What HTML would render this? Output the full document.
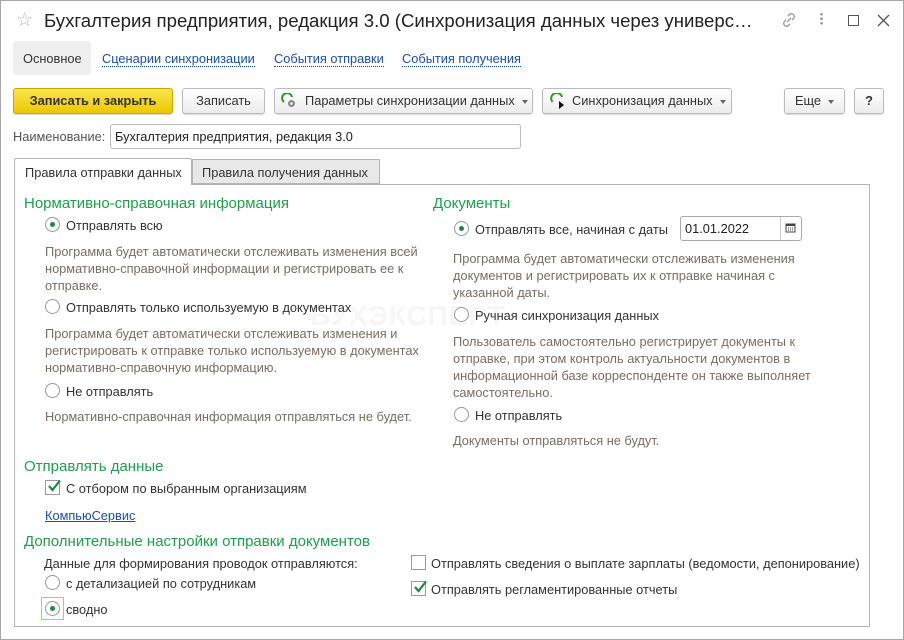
<!DOCTYPE html>
<html><head><meta charset="utf-8"><style>
*{margin:0;padding:0;box-sizing:border-box}
body{width:904px;height:640px;background:#fff;font-family:"Liberation Sans",Arial,sans-serif;font-size:12.8px;color:#333;position:relative;overflow:hidden}
.a{position:absolute;white-space:nowrap}
.frame{position:absolute;left:0;top:0;width:904px;height:640px;border:1px solid #a8a8a8}
.btn{position:absolute;height:26px;border:1px solid #bcbcbc;border-radius:3px;background:linear-gradient(#fff,#ececec);box-shadow:0 1px 1px rgba(0,0,0,.15);color:#333;line-height:24px;text-align:center}
.lnk{color:#1a4fa8;border-bottom:1px dotted #1a4fa8;line-height:14px}
.h{color:#1ea04b;font-size:15px}
.d{color:#7a6d62;line-height:17px;white-space:normal}
.r{position:absolute;width:15px;height:15px;border:1px solid #9a9a9a;border-radius:50%;background:#fff}
.r.on::after{content:"";position:absolute;left:4px;top:4px;width:5px;height:5px;border-radius:50%;background:#1c8a3e}
.cb{position:absolute;width:15px;height:15px;border:1px solid #9a9a9a;background:#fff}
.dd::after{content:"";display:inline-block;margin-left:7px;vertical-align:middle;border-left:3.5px solid transparent;border-right:3.5px solid transparent;border-top:4px solid #666}
</style></head><body>
<div class="frame"></div>
<div class="a" style="left:16px;top:9px;font-size:19px;color:#bbb">☆</div>
<div class="a" style="left:44px;top:10px;font-size:18.6px;color:#222">Бухгалтерия предприятия, редакция 3.0 (Синхронизация данных через универс…</div>
<svg class="a" style="left:780px;top:11px" width="18" height="18" viewBox="0 0 18 18" fill="none" stroke="#999" stroke-width="1.3"><path d="M7 11l4-4M8 5l2-2a3 3 0 014 4l-2 2M10 13l-2 2a3 3 0 01-4-4l2-2"/></svg>
<div class="a" style="left:820px;top:12px;width:3px;height:13px;background:radial-gradient(circle,#999 1.2px,transparent 1.5px) 0 0/3px 4.5px"></div>
<div class="a" style="left:848px;top:15px;width:11px;height:11px;border:1.3px solid #555"></div>
<svg class="a" style="left:877px;top:14px" width="13" height="13" viewBox="0 0 13 13"><path d="M1 1l11 11M12 1L1 12" stroke="#555" stroke-width="1.3"/></svg>

<div class="a" style="left:13px;top:41px;width:78px;height:34px;background:#efefef;border-radius:3px"></div>
<div class="a" style="left:23px;top:51px;color:#333">Основное</div>
<div class="a lnk" style="left:102px;top:52px">Сценарии синхронизации</div>
<div class="a lnk" style="left:274px;top:52px">События отправки</div>
<div class="a lnk" style="left:402px;top:52px">События получения</div>

<div class="btn" style="left:13px;top:88px;width:160px;background:linear-gradient(#fbe54a,#ecc802);border-color:#c9a800;font-weight:bold;color:#333">Записать и закрыть</div>
<div class="btn" style="left:182px;top:88px;width:83px">Записать</div>
<div class="btn" style="left:274px;top:88px;width:259px;text-align:left;padding-left:30px"><span class="dd">Параметры синхронизации данных</span></div>
<svg class="a" style="left:281px;top:93px" width="16" height="16" viewBox="0 0 16 16"><path d="M11 4A5 5 0 103 9" fill="none" stroke="#2a9a2a" stroke-width="2"/><circle cx="10.5" cy="10.5" r="3.5" fill="#888"/><circle cx="10.5" cy="10.5" r="1.3" fill="#fff"/></svg>
<div class="btn" style="left:542px;top:88px;width:190px;text-align:left;padding-left:29px"><span class="dd">Синхронизация данных</span></div>
<svg class="a" style="left:550px;top:93px" width="16" height="16" viewBox="0 0 16 16"><path d="M12 4A5.5 5.5 0 102.5 9" fill="none" stroke="#2a9a2a" stroke-width="2"/><path d="M9 8l5 4-5 4z" fill="#111"/></svg>
<div class="btn" style="left:784px;top:88px;width:61px"><span class="dd">Еще</span></div>
<div class="btn" style="left:854px;top:88px;width:30px;font-weight:bold">?</div>

<div class="a" style="left:13px;top:129px;color:#555">Наименование:</div>
<div class="a" style="left:110px;top:124px;width:411px;height:25px;border:1px solid #bbb;border-radius:3px;padding:4px 4px;color:#222">Бухгалтерия предприятия, редакция 3.0</div>

<div class="a" style="left:14px;top:184px;width:856px;height:443px;border:1px solid #b5b5b5"></div>
<div class="a" style="left:14px;top:158px;width:178px;height:27px;border:1px solid #b5b5b5;border-bottom:none;background:#fff;border-radius:2px 2px 0 0;padding:6px 10px;color:#333">Правила отправки данных</div>
<div class="a" style="left:192px;top:159px;width:188px;height:25px;border:1px solid #b5b5b5;background:#e8e8e8;padding:5px 9px;color:#333">Правила получения данных</div>

<div class="a" style="left:310px;top:300px;font-size:28px;font-weight:bold;color:#f6f6f6;letter-spacing:1px">БУХЭКСПЕРТ</div>

<div class="a h" style="left:24px;top:195px">Нормативно-справочная информация</div>
<div class="r on" style="left:45px;top:217px"></div>
<div class="a" style="left:66px;top:218px">Отправлять всю</div>
<div class="a d" style="left:45px;top:243px;width:385px">Программа будет автоматически отслеживать изменения всей нормативно-справочной информации и регистрировать ее к отправке.</div>
<div class="r" style="left:45px;top:299px"></div>
<div class="a" style="left:66px;top:300px">Отправлять только используемую в документах</div>
<div class="a d" style="left:45px;top:325px;width:385px">Программа будет автоматически отслеживать изменения и регистрировать к отправке только используемую в документах нормативно-справочную информацию.</div>
<div class="r" style="left:45px;top:383px"></div>
<div class="a" style="left:66px;top:384px">Не отправлять</div>
<div class="a d" style="left:45px;top:408px">Нормативно-справочная информация отправляться не будет.</div>

<div class="a h" style="left:433px;top:195px">Документы</div>
<div class="r on" style="left:454px;top:221px"></div>
<div class="a" style="left:475px;top:222px">Отправлять все, начиная с даты</div>
<div class="a" style="left:680px;top:216px;width:122px;height:25px;border:1px solid #aaa;border-radius:3px;padding:4px 4px;color:#222">01.01.2022</div>
<div class="a" style="left:780px;top:217px;width:1px;height:23px;background:#ccc"></div>
<svg class="a" style="left:785px;top:222px" width="11" height="11" viewBox="0 0 11 11"><rect x="1" y="2" width="9" height="8" fill="none" stroke="#444"/><rect x="1" y="2" width="9" height="2" fill="#444"/><path d="M3 6h1M5 6h1M7 6h1M3 8h1M5 8h1M7 8h1" stroke="#444"/></svg>
<div class="a d" style="left:453px;top:250px;width:375px">Программа будет автоматически отслеживать изменения документов и регистрировать их к отправке начиная с указанной даты.</div>
<div class="r" style="left:454px;top:307px"></div>
<div class="a" style="left:475px;top:308px">Ручная синхронизация данных</div>
<div class="a d" style="left:453px;top:333px;width:370px">Пользователь самостоятельно регистрирует документы к отправке, при этом контроль актуальности документов в информационной базе корреспонденте он также выполняет самостоятельно.</div>
<div class="r" style="left:454px;top:407px"></div>
<div class="a" style="left:475px;top:408px">Не отправлять</div>
<div class="a d" style="left:453px;top:432px">Документы отправляться не будут.</div>

<div class="a h" style="left:24px;top:458px">Отправлять данные</div>
<div class="cb" style="left:45px;top:480px"></div>
<svg class="a" style="left:46px;top:479px" width="16" height="15" viewBox="0 0 16 15"><path d="M3 7l3.5 4L14 1.5" fill="none" stroke="#1c8a3e" stroke-width="2.2"/></svg>
<div class="a" style="left:66px;top:481px">С отбором по выбранным организациям</div>
<div class="a" style="left:45px;top:508px;color:#1a4fa8;text-decoration:underline">КомпьюСервис</div>

<div class="a h" style="left:24px;top:533px">Дополнительные настройки отправки документов</div>
<div class="a" style="left:44px;top:556px">Данные для формирования проводок отправляются:</div>
<div class="r" style="left:45px;top:575px"></div>
<div class="a" style="left:66px;top:576px">с детализацией по сотрудникам</div>
<div class="a" style="left:41px;top:597px;width:23px;height:23px;border:1px solid #f0c000"></div>
<div class="r on" style="left:45px;top:601px"></div>
<div class="a" style="left:66px;top:602px">сводно</div>

<div class="cb" style="left:411px;top:555px"></div>
<div class="a" style="left:431px;top:556px">Отправлять сведения о выплате зарплаты (ведомости, депонирование)</div>
<div class="cb" style="left:411px;top:581px"></div>
<svg class="a" style="left:412px;top:580px" width="16" height="15" viewBox="0 0 16 15"><path d="M3 7l3.5 4L14 1.5" fill="none" stroke="#1c8a3e" stroke-width="2.2"/></svg>
<div class="a" style="left:431px;top:582px">Отправлять регламентированные отчеты</div>
</body></html>
